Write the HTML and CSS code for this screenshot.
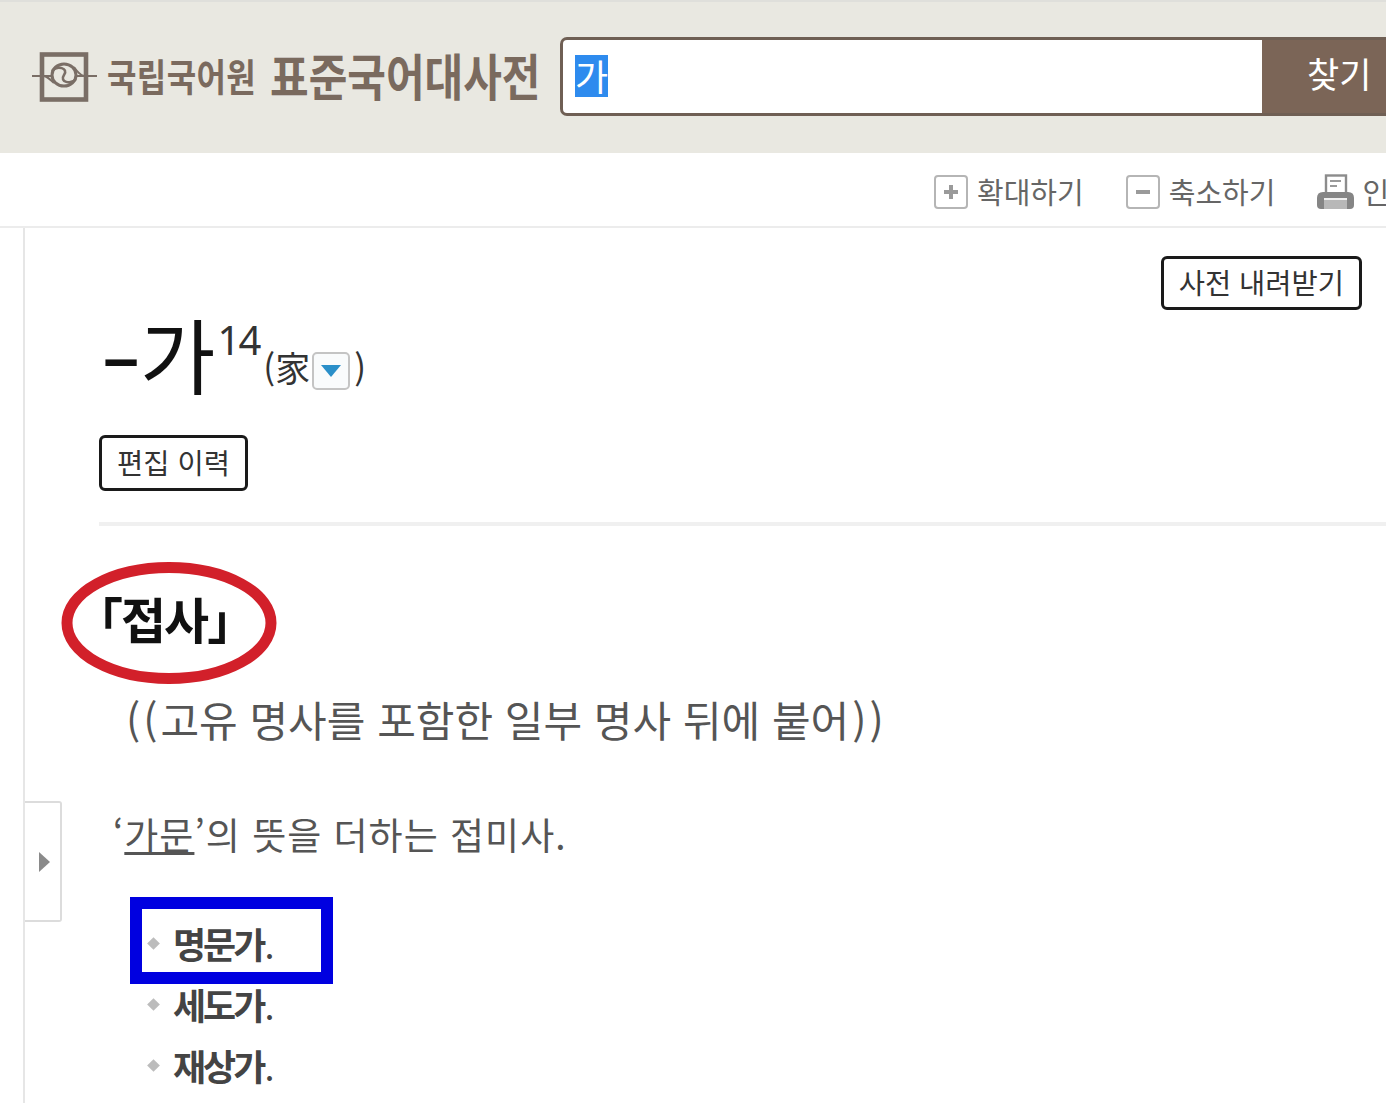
FILE: index.html
```html
<!DOCTYPE html>
<html lang="ko">
<head>
<meta charset="utf-8">
<title>표준국어대사전</title>
<link rel="stylesheet" href="styles.css">
</head>
<body>
<header class="top">
  <div class="brand">
    <svg class="logo" viewBox="0 0 65 50" width="65" height="50" aria-hidden="true">
      <rect x="10" y="2.5" width="44" height="45" fill="none" stroke="#7a6e66" stroke-width="4.6"/>
      <path d="M0 24H20M44 24H65" stroke="#7a6e66" stroke-width="2" fill="none"/>
      <ellipse cx="32" cy="23" rx="12" ry="11" fill="none" stroke="#7a6e66" stroke-width="3"/>
      <path d="M20 19C25 13 37 16 32 23C27 30 39 33 44 27" stroke="#7a6e66" stroke-width="2.6" fill="none"/>
      <path d="M12 24C16 25 18 27 22 31M52 24C48 23 46 21 42 15" stroke="#7a6e66" stroke-width="2" fill="none"/>
    </svg>
    <span class="org">국립국어원</span>
    <span class="dict">표준국어대사전</span>
  </div>
  <form class="search">
    <div class="field"><span class="sel">가</span></div>
    <div class="go">찾기</div>
  </form>
</header>
<nav class="tools">
  <span class="tool"><svg viewBox="0 0 34 34" width="34" height="34"><rect x="1" y="1" width="32" height="32" rx="3" fill="#fff" stroke="#b5b5b5" stroke-width="2"/><path d="M17 10V24M10 17H24" stroke="#9a9a9a" stroke-width="4"/></svg>확대하기</span>
  <span class="tool"><svg viewBox="0 0 34 34" width="34" height="34"><rect x="1" y="1" width="32" height="32" rx="3" fill="#fff" stroke="#b5b5b5" stroke-width="2"/><path d="M10 17H24" stroke="#9a9a9a" stroke-width="4"/></svg>축소하기</span>
  <span class="tool"><svg viewBox="0 0 37 35" width="37" height="35"><rect x="9" y="1.5" width="20" height="18" fill="#fff" stroke="#8c8c8c" stroke-width="2.4"/><path d="M13 7H24M13 12H20" stroke="#9a9a9a" stroke-width="2"/><path d="M0 31V24Q0 18 6 18H31Q37 18 37 24V31Q37 35 33 35H4Q0 35 0 31Z" fill="#858585"/><rect x="7" y="25" width="23" height="10" fill="#b8b8b8"/><path d="M7 25H30" stroke="#f0f0f0" stroke-width="2"/></svg>인쇄하기</span>
</nav>
<main class="page">
  <button class="side" type="button" aria-label="열기"><i class="side-arrow"></i></button>
  <div class="content">
    <div class="download-row"><span class="btn">사전 내려받기</span></div>
    <h1 class="word"><span class="dash">–</span>가<sup>14</sup><span class="origin">(家<i class="drop"><i class="drop-arrow"></i></i>)</span></h1>
    <span class="btn btn-small">편집 이력</span>
    <hr class="rule">
    <div class="pos-wrap">
      <p class="pos">「접사」</p>
      <svg class="ring" viewBox="0 0 216 122" width="216" height="122" aria-hidden="true"><ellipse cx="108" cy="61" rx="102" ry="55.5" fill="none" stroke="#d2202a" stroke-width="11"/></svg>
    </div>
    <p class="note"><span class="paren">((</span>고유 명사를 포함한 일부 명사 뒤에 붙어<span class="paren close">))</span></p>
    <p class="def">‘<u>가문</u>’의 뜻을 더하는 접미사.</p>
    <ul class="examples">
      <li class="marked">명문가<span class="stop">.</span></li>
      <li>세도가<span class="stop">.</span></li>
      <li>재상가<span class="stop">.</span></li>
    </ul>
  </div>
</main>
</body>
</html>
```
FILE: styles.css
```css
*, *::before, *::after { box-sizing: border-box; }
html, body { margin: 0; padding: 0; }
body {
  width: 1386px;
  height: 1103px;
  overflow: hidden;
  background: #fff;
  color: #333;
  font-family: "Noto Sans CJK KR", "Noto Sans", sans-serif;
}
.top {
  height: 153px;
  background: #e9e8e1;
  display: flex;
  align-items: center;
  padding: 0 0 0 32px;
  border-top: 2px solid #dfdfdb;
}
.brand {
  display: flex;
  align-items: center;
  width: 528px;
  color: #7a6a5e;
  flex: none;
}
.logo { flex: none; margin-right: 10px; margin-top: -1px; }
.org {
  font-size: 32px;
  font-weight: 700;
  width: 163px;
  margin-bottom: 7px;
  letter-spacing: 0.4px;
  white-space: nowrap;
  transform: scaleY(1.18);
}
.dict {
  font-size: 42px;
  font-weight: 700;
  margin-bottom: 6px;
  white-space: nowrap;
  transform: scaleY(1.18);
}
.search {
  flex: 1;
  height: 79px;
  display: flex;
  border: 3px solid #6f5f54;
  border-right: 0;
  border-radius: 7px 0 0 7px;
  background: #fff;
  margin-top: -3px;
}
.field { flex: 1; padding-left: 12px; display: flex; align-items: center; }
.sel {
  background: #2e8bee;
  color: #fff;
  font-size: 36px;
  line-height: 40px;
  height: 42px;
}
.go {
  width: 124px;
  background: #7b6557;
  color: #fff;
  font-size: 35px;
  padding-left: 45px;
  padding-bottom: 7px;
  display: flex;
  align-items: center;
  white-space: nowrap;
}
.tools {
  height: 75px;
  border-bottom: 2px solid #ececec;
  display: flex;
  align-items: center;
  gap: 42px;
  padding-left: 934px;
  padding-top: 2px;
  color: #666;
  font-size: 29px;
  white-space: nowrap;
  overflow: hidden;
}
.tool { display: flex; align-items: center; gap: 9px; flex: none; line-height: 34px; }
.tool svg { margin-top: 2px; }
.tool:last-child { gap: 8px; }
.page { position: relative; height: 875px; }
.side {
  position: absolute;
  left: 24px;
  top: 573px;
  width: 38px;
  height: 121px;
  background: #fff;
  border: 2px solid #dcdcdc;
  border-left: 0;
  border-radius: 0 3px 3px 0;
  padding: 0 0 0 5px;
  display: flex;
  align-items: center;
  justify-content: center;
}
.side-arrow {
  width: 0;
  height: 0;
  border-left: 11px solid #8a8a8a;
  border-top: 10px solid transparent;
  border-bottom: 10px solid transparent;
}
.content {
  margin-left: 23px;
  height: 100%;
  border-left: 2px solid #e6e6e6;
  padding-left: 74px;
  position: relative;
}
.download-row { display: flex; justify-content: flex-end; padding: 28px 24px 0 0; height: 82px; }
.btn {
  display: inline-flex;
  align-items: center;
  justify-content: center;
  height: 54px;
  padding: 0 15px 4px;
  border: 3px solid #1a1a1a;
  border-radius: 6px;
  font-size: 28.5px;
  color: #333;
  background: #fff;
  white-space: nowrap;
}
.btn-small { width: 149px; height: 56px; padding: 0 0 3px; }
.word {
  margin: 0;
  height: 125px;
  font-weight: 400;
  font-size: 82px;
  line-height: 86px;
  color: #111;
  white-space: nowrap;
  display: flex;
  align-items: flex-start;
}
.dash { font-size: 70px; font-weight: 700; margin-left: 3px; margin-right: 0; }
.word sup { font-size: 40px; font-family: "Noto Sans", sans-serif; line-height: 50px; margin-top: 5px; color: #333; letter-spacing: -2px; margin-left: 2px; }
.origin { font-size: 35px; line-height: 50px; margin-top: 32px; display: flex; align-items: center; color: #333; margin-left: 4px; }
.drop {
  width: 38px;
  height: 38px;
  margin: 7px 4px 0 2px;
  border: 2px solid #c4c4c4;
  border-radius: 5px;
  background: #f9fbfc;
  display: flex;
  align-items: center;
  justify-content: center;
}
.drop-arrow {
  width: 0;
  height: 0;
  border-top: 12px solid #2a8fc9;
  border-left: 10px solid transparent;
  border-right: 10px solid transparent;
}
.rule { border: 0; height: 4px; background: #f0f0f0; margin: 31px 0 0; }
.pos-wrap { position: relative; height: 163px; }
.pos {
  margin: 0;
  position: absolute;
  left: -25px;
  top: 57px;
  font-size: 49px;
  font-weight: 700;
  line-height: 70px;
  color: #111;
  letter-spacing: -2px;
  white-space: nowrap;
}
.ring { position: absolute; left: -38px; top: 36px; }
.note {
  margin: 0 0 0 27px;
  height: 120px;
  font-size: 42px;
  line-height: 60px;
  color: #555;
  white-space: nowrap;
}
.paren { letter-spacing: 3px; }
.close { margin-left: 3px; }
.def {
  margin: 0 0 0 14px;
  height: 92px;
  font-size: 37px;
  line-height: 50px;
  color: #555;
  letter-spacing: 1px;
  white-space: nowrap;
}
.examples { list-style: none; margin: 0 0 0 48px; padding: 0; position: relative; top: 12px; }
.examples li {
  position: relative;
  height: 61px;
  padding-left: 26px;
  font-size: 36px;
  line-height: 61px;
  font-weight: 700;
  color: #444;
  letter-spacing: -3px;
  white-space: nowrap;
}
.stop { font-weight: 400; margin-left: 1px; }
.examples li::before {
  content: "";
  position: absolute;
  left: 2px;
  top: 26px;
  width: 9px;
  height: 9px;
  background: #bcbcbc;
  transform: rotate(45deg);
}
.marked::after {
  content: "";
  position: absolute;
  left: -17px;
  top: -16px;
  width: 203px;
  height: 87px;
  border: 12px solid #0000e0;
}
```
